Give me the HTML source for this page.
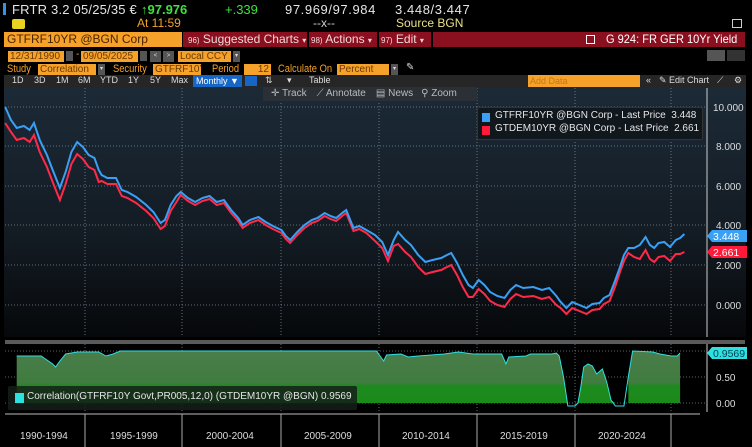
<!DOCTYPE html>
<html><head><meta charset="utf-8"><style>
*{margin:0;padding:0;box-sizing:border-box}
body{width:752px;height:447px;background:#000;overflow:hidden;position:relative;font-family:"Liberation Sans",sans-serif;}
.a{position:absolute;white-space:nowrap}
.ob{position:absolute;background:#f5a12a;color:#6b3a00;font-size:10px;line-height:11px;height:11px;padding-left:2px;overflow:hidden;white-space:nowrap}
.o{color:#f5a12a}
.dd{position:absolute;background:#555;width:7px;height:11px;color:#ddd;font-size:6px;text-align:center;line-height:11px}
.tb{position:absolute;color:#ddd;font-size:9px;top:75px;white-space:nowrap}
.l5{position:absolute;color:#f5a12a;font-size:11px;top:63px;transform:scaleX(0.85);transform-origin:left;white-space:nowrap}
</style></head><body>
<!-- row1 -->
<div class="a" style="left:3px;top:3px;width:3px;height:12px;background:#3a8fe8"></div>
<div class="a" style="left:12px;top:2px;font-size:13px;color:#e6e6e6;letter-spacing:0.2px">FRTR 3.2 05/25/35 €</div>
<div class="a" style="left:141px;top:2px;font-size:13px;color:#3fe03f;font-weight:bold">↑97.976</div>
<div class="a" style="left:225px;top:2px;font-size:13px;color:#3fe03f">+.339</div>
<div class="a" style="left:285px;top:2px;font-size:13px;color:#e6e6e6;letter-spacing:0.6px">97.969/97.984</div>
<div class="a" style="left:395px;top:2px;font-size:13px;color:#e6e6e6;letter-spacing:0.6px">3.448/3.447</div>
<!-- row2 -->
<div class="a" style="left:12px;top:19px;width:13px;height:10px;background:#e8d320;border-radius:2px"></div>
<div class="a" style="left:137px;top:16px;font-size:12px;color:#f5a12a">At 11:59</div>
<div class="a" style="left:313px;top:16px;font-size:12px;color:#ccc">--x--</div>
<div class="a" style="left:396px;top:16px;font-size:12px;color:#e8e08a">Source BGN</div>
<div class="a" style="left:732px;top:19px;width:10px;height:9px;border:1px solid #ccc"></div>
<!-- row3 -->
<div class="a" style="left:4px;top:32px;width:178px;height:15px;background:#f5a12a;color:#4a2500;font-size:12px;line-height:15px;padding-left:3px">GTFRF10YR @BGN Corp</div>
<div class="a" style="left:183px;top:32px;width:562px;height:15px;background:#8a0f1f"></div>
<div class="a" style="left:188px;top:32px;font-size:12px;line-height:15px;color:#f0d8d8"><span style="font-size:8px">96)</span> Suggested Charts <span style="font-size:8px">▾</span></div>
<div class="a" style="left:307px;top:32px;width:2px;height:15px;background:#000"></div>
<div class="a" style="left:311px;top:32px;font-size:12px;line-height:15px;color:#f0d8d8"><span style="font-size:8px">98)</span> Actions <span style="font-size:8px">▾</span></div>
<div class="a" style="left:377px;top:32px;width:2px;height:15px;background:#000"></div>
<div class="a" style="left:381px;top:32px;font-size:12px;line-height:15px;color:#f0d8d8"><span style="font-size:8px">97)</span> Edit <span style="font-size:8px">▾</span></div>
<div class="a" style="left:431px;top:32px;width:2px;height:15px;background:#000"></div>
<div class="a" style="left:586px;top:35px;width:9px;height:9px;border:1.5px solid #fff"></div>
<div class="a" style="left:606px;top:32px;font-size:12px;line-height:15px;color:#fff;transform:scaleX(0.92);transform-origin:left">G 924: FR GER 10Yr Yield</div>
<!-- row4 -->
<div class="ob" style="left:8px;top:51px;width:56px">12/31/1990</div>
<div class="a" style="left:66px;top:51px;width:7px;height:10px;background:#555"></div>
<div class="a" style="left:76px;top:49px;font-size:10px;color:#f5a12a">-</div>
<div class="ob" style="left:81px;top:51px;width:57px">09/05/2025</div>
<div class="a" style="left:140px;top:51px;width:7px;height:10px;background:#555"></div>
<div class="dd" style="left:150px;top:51px;width:11px">&lt;</div>
<div class="dd" style="left:163px;top:51px;width:11px">&gt;</div>
<div class="ob" style="left:178px;top:51px;width:53px">Local CCY</div>
<div class="dd" style="left:233px;top:51px">▾</div>
<div class="a" style="left:707px;top:50px;width:18px;height:11px;background:#555"></div>
<div class="a" style="left:727px;top:50px;width:18px;height:11px;background:#333"></div>
<!-- row5 -->
<div class="l5" style="left:7px">Study</div>
<div class="ob" style="left:38px;top:64px;width:58px">Correlation</div>
<div class="dd" style="left:98px;top:64px">▾</div>
<div class="l5" style="left:113px">Security</div>
<div class="ob" style="left:153px;top:64px;width:48px">GTFRF10Y</div>
<div class="l5" style="left:212px">Period</div>
<div class="ob" style="left:244px;top:64px;width:27px;text-align:right;padding-right:2px">12</div>
<div class="l5" style="left:278px">Calculate On</div>
<div class="ob" style="left:337px;top:64px;width:52px">Percent</div>
<div class="dd" style="left:391px;top:64px">▾</div>
<div class="a" style="left:406px;top:62px;font-size:10px;color:#ddd">✎</div>
<!-- row6 toolbar -->
<div class="a" style="left:4px;top:75px;width:742px;height:12px;background:#262626"></div>
<div class="tb" style="left:12px">1D</div><div class="tb" style="left:34px">3D</div><div class="tb" style="left:56px">1M</div><div class="tb" style="left:78px">6M</div><div class="tb" style="left:100px">YTD</div><div class="tb" style="left:128px">1Y</div><div class="tb" style="left:150px">5Y</div><div class="tb" style="left:171px">Max</div>
<div class="a" style="left:193px;top:75px;width:49px;height:12px;background:#1666c8;color:#fff;font-size:9px;line-height:12px;padding-left:3px">Monthly ▼</div>
<div class="a" style="left:245px;top:76px;width:12px;height:10px;background:#1666c8"></div>
<div class="tb" style="left:265px">⇅</div><div class="tb" style="left:287px">▾</div>
<div class="tb" style="left:309px">Table</div>
<div class="a" style="left:528px;top:75px;width:112px;height:12px;background:#f5a12a;color:#c07a1a;font-size:9px;line-height:12px;padding-left:2px">Add Data</div>
<div class="tb" style="left:646px">«</div>
<div class="tb" style="left:659px">✎ Edit Chart</div>
<div class="tb" style="left:717px">⟋</div><div class="tb" style="left:734px">⚙</div>
<!-- chart area -->
<div class="a" style="left:4px;top:87px;width:742px;height:250px;background:linear-gradient(#1c2a37,#131b23 60%,#06080a)"></div>
<div class="a" style="left:4px;top:337px;width:742px;height:110px;background:#000"></div>
<svg class="a" style="left:0;top:0" width="752" height="447">
 <g stroke="#7a8896" stroke-width="0.8" stroke-dasharray="1,2">
  <line x1="5" y1="107" x2="705" y2="107"/><line x1="5" y1="146" x2="705" y2="146"/><line x1="5" y1="186" x2="705" y2="186"/><line x1="5" y1="225" x2="705" y2="225"/><line x1="5" y1="265" x2="705" y2="265"/><line x1="5" y1="305" x2="705" y2="305"/>
  <line x1="85" y1="88" x2="85" y2="337"/><line x1="182" y1="88" x2="182" y2="337"/><line x1="281" y1="88" x2="281" y2="337"/><line x1="379" y1="88" x2="379" y2="337"/><line x1="477" y1="88" x2="477" y2="337"/><line x1="575" y1="88" x2="575" y2="337"/><line x1="671" y1="88" x2="671" y2="337"/>
  <line x1="5" y1="351" x2="705" y2="351"/><line x1="5" y1="377" x2="705" y2="377"/><line x1="5" y1="403" x2="705" y2="403"/>
  <line x1="85" y1="344" x2="85" y2="412"/><line x1="182" y1="344" x2="182" y2="412"/><line x1="281" y1="344" x2="281" y2="412"/><line x1="379" y1="344" x2="379" y2="412"/><line x1="477" y1="344" x2="477" y2="412"/><line x1="575" y1="344" x2="575" y2="412"/><line x1="671" y1="344" x2="671" y2="412"/>
 </g>
 <defs><linearGradient id="gg" gradientUnits="userSpaceOnUse" x1="0" y1="350" x2="0" y2="403"><stop offset="0" stop-color="#4b7d4b"/><stop offset="0.62" stop-color="#3f7c3f"/><stop offset="0.68" stop-color="#1d8a1d"/><stop offset="1" stop-color="#1a8a1a"/></linearGradient></defs>
 <g transform="translate(-2,0) scale(1.439,1)">
  <polygon fill="url(#gg)" points="13,403 13,356 30,356 33,359 38,364 40,367 43,361 47,354 55,352 70,352 75,356 80,354 85,351 263,351 268,361 270,355 280,354 285,357 292,356 310,354 320,352 330,354 350,354 353,364 355,357 367,356 370,354 385,354 388,353 390,356 393,377 396,403 403,403 405,387 407,367 410,364 413,366 416,374 420,369 423,382 426,400 429,403 438,403 438,377 441,351 455,352 460,354 468,356 472,356 474,353 474,403"/>
  <polyline fill="none" stroke="#2fe0e0" stroke-width="1" vector-effect="non-scaling-stroke" points="13,356 30,356 33,359 38,364 40,367 43,361 47,354 55,352 70,352 75,356 80,354 85,351 263,351 268,361 270,355 280,354 285,357 292,356 310,354 320,352 330,354 350,354 353,364 355,357 367,356 370,354 385,354 388,353 390,356 393,377 396,406 401,406 403,403 405,387 407,367 410,364 413,366 416,374 420,369 423,382 426,400 429,406 435,406 438,377 441,351 455,352 460,354 468,356 472,356 474,353"/>
  <polyline fill="none" stroke="#ff2a4a" stroke-width="2" vector-effect="non-scaling-stroke" points="5,123 9,132 13,140 18,138 22,142 25,135 29,152 34,167 38,182 43,200 47,184 51,164 55,154 59,159 63,167 67,170 70,182 72,181 76,184 82,184 86,196 90,198 96,203 103,211 108,218 113,229 116,226 120,211 124,202 127,195 132,201 137,205 142,201 147,199 152,205 157,203 162,213 167,221 170,228 175,223 181,220 186,225 191,229 197,233 200,239 203,243 208,235 213,228 218,223 222,221 227,216 231,219 235,221 240,215 242,213 247,231 251,229 256,233 262,241 267,248 271,261 275,246 278,244 283,252 287,257 292,267 297,274 302,272 308,270 312,267 315,265 319,275 323,287 327,297 330,297 334,289 338,294 342,301 347,305 352,307 356,299 360,294 365,297 372,296 378,299 383,297 388,305 391,308 395,314 399,308 404,311 409,314 413,310 418,309 421,304 425,301 429,286 432,273 435,261 438,253 442,257 446,259 450,250 453,259 456,262 459,257 463,256 467,261 471,254 474,254 477,252"/>
  <polyline fill="none" stroke="#3aa0f5" stroke-width="2" vector-effect="non-scaling-stroke" points="5,107 9,120 13,128 18,126 22,130 25,123 29,140 34,155 38,170 43,188 47,172 51,152 55,142 59,147 63,155 67,158 70,170 72,175 76,178 82,178 86,190 90,192 96,197 103,205 108,212 113,223 116,220 120,205 124,196 127,192 132,198 137,202 142,198 147,196 152,202 157,200 162,210 167,218 170,225 175,220 181,217 186,222 191,226 197,230 200,236 203,240 208,232 213,225 218,220 222,218 227,213 231,216 235,218 240,212 242,210 247,228 251,226 256,230 262,235 267,242 271,255 275,240 278,232 283,240 287,245 292,255 297,262 302,260 308,258 312,255 315,253 319,263 323,275 327,285 330,288 334,280 338,285 342,292 347,296 352,298 356,290 360,285 365,288 372,287 378,290 383,288 388,296 391,302 395,308 399,302 404,305 409,308 413,304 418,303 421,298 425,295 429,280 432,268 435,255 438,248 442,248 446,245 450,237 453,245 456,248 459,243 463,242 467,247 471,240 474,238 477,234"/>
 </g>
 <line x1="707" y1="88" x2="707" y2="337" stroke="#ccc" stroke-width="1"/>
 <line x1="707" y1="344" x2="707" y2="412" stroke="#ccc" stroke-width="1"/>
 <rect x="5" y="340" width="740" height="4" fill="#5a5a5a"/>
 <line x1="5" y1="414" x2="700" y2="414" stroke="#bbb" stroke-width="1"/>
 <g stroke="#aaa"><line x1="85" y1="414" x2="85" y2="447"/><line x1="182" y1="414" x2="182" y2="447"/><line x1="281" y1="414" x2="281" y2="447"/><line x1="379" y1="414" x2="379" y2="447"/><line x1="477" y1="414" x2="477" y2="447"/><line x1="575" y1="414" x2="575" y2="447"/><line x1="671" y1="414" x2="671" y2="447"/></g>
 <g font-family="Liberation Sans" font-size="10" fill="#ddd">
  <text x="713" y="111">10.000</text><text x="716" y="150">8.000</text><text x="716" y="190">6.000</text><text x="716" y="229">4.000</text><text x="716" y="269">2.000</text><text x="716" y="309">0.000</text>
  <text x="716" y="381">0.50</text><text x="716" y="407">0.00</text>
  <text x="20" y="439">1990-1994</text><text x="110" y="439">1995-1999</text><text x="206" y="439">2000-2004</text><text x="304" y="439">2005-2009</text><text x="402" y="439">2010-2014</text><text x="500" y="439">2015-2019</text><text x="598" y="439">2020-2024</text>
 </g>
 <polygon points="707,236 712,230 747,230 747,242 712,242" fill="#3aa0f5"/>
 <text x="713" y="240" font-family="Liberation Sans" font-size="10.5" fill="#fff">3.448</text>
 <polygon points="707,252 712,246 747,246 747,258 712,258" fill="#ff1a3a"/>
 <text x="713" y="256" font-family="Liberation Sans" font-size="10.5" fill="#fff">2.661</text>
 <polygon points="707,353 712,347 747,347 747,359 712,359" fill="#2fe0e0"/>
 <text x="713" y="357" font-family="Liberation Sans" font-size="10.5" fill="#045">0.9569</text>
</svg>
<!-- track bar -->
<div class="a" style="left:263px;top:87px;width:214px;height:14px;background:#2b3036;color:#bbb;font-size:10px;line-height:14px">
 <span style="margin-left:8px">✛ Track</span><span style="margin-left:10px">⟋ Annotate</span><span style="margin-left:10px">▤ News</span><span style="margin-left:8px">⚲ Zoom</span></div>
<!-- legend -->
<div class="a" style="left:477px;top:107px;width:226px;height:33px;background:#10171d;border:1px solid #333;border-radius:2px"></div>
<div class="a" style="left:482px;top:113px;width:8px;height:9px;background:#3aa0f5"></div>
<div class="a" style="left:495px;top:110px;font-size:10px;color:#e6e6e6">GTFRF10YR @BGN Corp - Last Price &nbsp;3.448</div>
<div class="a" style="left:482px;top:126px;width:8px;height:9px;background:#ff1a3a"></div>
<div class="a" style="left:495px;top:123px;font-size:10px;color:#e6e6e6">GTDEM10YR @BGN Corp - Last Price &nbsp;2.661</div>
<div class="a" style="left:8px;top:386px;width:349px;height:24px;background:rgba(20,30,25,0.85);border-radius:2px"></div>
<div class="a" style="left:15px;top:393px;width:9px;height:10px;background:#2fe0e0"></div>
<div class="a" style="left:27px;top:391px;font-size:10px;color:#e6e6e6">Correlation(GTFRF10Y Govt,PR005,12,0) (GTDEM10YR @BGN) 0.9569</div>
</body></html>
